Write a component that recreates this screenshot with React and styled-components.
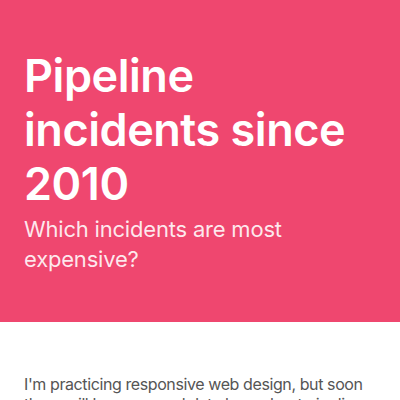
import React from "react";
import styled, { createGlobalStyle } from "styled-components";

const Global = createGlobalStyle`
  html, body { margin: 0; padding: 0; background: #ffffff; }
  body { font-family: Inter, "Noto Sans", sans-serif; }
`;

const Header = styled.header`
  background: #ef476f;
  color: #ffffff;
  padding: 49px 24px 48px;
`;

const Title = styled.h1`
  margin: 0;
  font-size: 45px;
  line-height: 54px;
  font-weight: 600;
  letter-spacing: -0.45px;
`;

const Subtitle = styled.p`
  margin: 3px 0 0;
  font-size: 22px;
  line-height: 30px;
  font-weight: 400;
  letter-spacing: -0.2px;
  color: rgba(255, 255, 255, 0.88);
`;

const Main = styled.main`
  padding: 52px 24px 24px;
`;

const Paragraph = styled.p`
  margin: 0;
  font-size: 16px;
  line-height: 20px;
  letter-spacing: -0.4px;
  color: #555555;
`;

export default function App() {
  return (
    <>
      <Global />
      <Header>
        <Title>Pipeline incidents since 2010</Title>
        <Subtitle>Which incidents are most expensive?</Subtitle>
      </Header>
      <Main>
        <Paragraph>
          I'm practicing responsive web design, but soon there will be some real data here about pipeline incidents.
        </Paragraph>
      </Main>
    </>
  );
}
